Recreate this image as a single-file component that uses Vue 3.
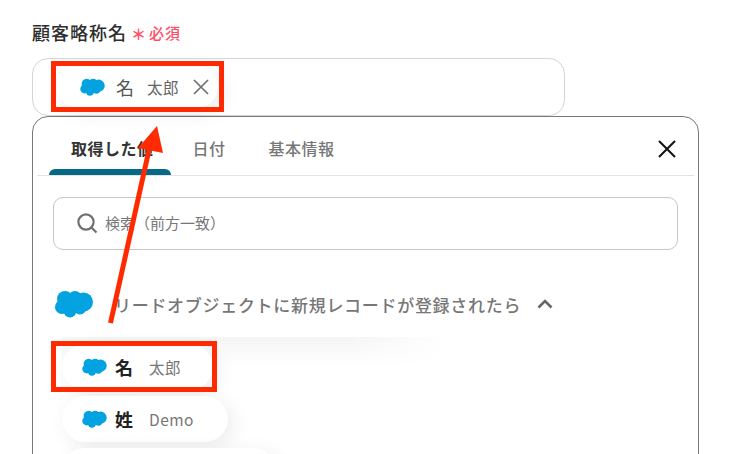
<script setup>
const tabs = [
  { label: '取得した値', active: true },
  { label: '日付', active: false },
  { label: '基本情報', active: false },
]
const rows = [
  { key: '名', value: '太郎', width: '151px' },
  { key: '姓', value: 'Demo', width: '166px' },
  { key: '', value: '', width: '215px' },
]
const lobes = [
  [10, 9, 8],
  [20, 8, 7],
  [28.5, 12, 9.5],
  [7, 17, 7],
  [15, 21, 6.500],
  [25, 18, 6.500],
  [17, 14, 9],
]
</script>

<template>
  <div class="page">
    <div class="label-row">
      <span class="label">顧客略称名</span>
      <span class="star">＊</span>
      <span class="required">必須</span>
    </div>

    <div class="input">
      <div class="chip chip-top">
        <svg class="cloud" viewBox="0 0 38 28"><circle v-for="(c, i) in lobes" :key="i" :cx="c[0]" :cy="c[1]" :r="c[2]" /></svg>
        <span class="chip-key thin">名</span>
        <span class="chip-value">太郎</span>
        <svg class="chip-x" viewBox="0 0 16 16"><path d="M1 1l14 14M15 1L1 15" /></svg>
      </div>
    </div>

    <div class="panel">
      <div class="tabs">
        <div v-for="t in tabs" :key="t.label" class="tab" :class="{ active: t.active }">{{ t.label }}</div>
        <svg class="close" viewBox="0 0 18 18"><path d="M1 1l16 16M17 1L1 17" /></svg>
      </div>

      <div class="search">
        <svg class="lens" viewBox="0 0 21 21"><circle cx="9" cy="9" r="7.600" /><path d="M14.500 14.500l5 5" /></svg>
        <span class="placeholder">検索（前方一致）</span>
      </div>

      <div class="section">
        <svg class="cloud-big" viewBox="0 0 38 28"><circle v-for="(c, i) in lobes" :key="i" :cx="c[0]" :cy="c[1]" :r="c[2]" /></svg>
        <span class="section-title">リードオブジェクトに新規レコードが登録されたら</span>
        <svg class="chev" viewBox="0 0 16 10"><path d="M1.500 8.500L8 2l6.500 6.500" /></svg>
      </div>

      <div class="list">
        <div class="shade"></div>
        <div v-for="(r, i) in rows" :key="i" class="chip chip-row" :style="{ width: r.width }">
          <template v-if="r.key">
            <svg class="cloud" viewBox="0 0 38 28"><circle v-for="(c, j) in lobes" :key="j" :cx="c[0]" :cy="c[1]" :r="c[2]" /></svg>
            <span class="chip-key">{{ r.key }}</span>
            <span class="chip-value">{{ r.value }}</span>
          </template>
        </div>
      </div>
    </div>

    <div class="mark mark-a"></div>
    <div class="mark mark-b"></div>
    <svg class="arrow" viewBox="0 0 750 454" width="750" height="454">
      <path d="M110.500 323L149 150" />
      <polygon points="157,126 163,153 138,148" />
    </svg>
  </div>
</template>

<style>
html, body { margin: 0; background: #fff; }
</style>

<style scoped>
.page {
  position: relative;
  width: 750px;
  height: 454px;
  overflow: hidden;
  box-sizing: border-box;
  padding: 19px 0 0 32px;
  background: #fff;
  font-family: "Noto Sans CJK JP", "Noto Sans", sans-serif;
  color: #333;
}
.label-row {
  display: flex;
  align-items: center;
  height: 26px;
}
.label { font-size: 18px; font-weight: 500; letter-spacing: 1px; color: #2e2e2e; }
.star { margin: 3px 0 0 4px; font-size: 15px; font-weight: 700; color: #ff4d67; }
.required { margin-left: 3px; font-size: 15px; font-weight: 500; letter-spacing: 1px; color: #ff4d67; }

.input {
  box-sizing: border-box;
  display: flex;
  align-items: center;
  width: 533px;
  height: 58px;
  margin-top: 13px;
  padding-left: 24px;
  border: 1px solid #d2d4de;
  border-radius: 16px;
}
.chip {
  box-sizing: border-box;
  display: flex;
  align-items: center;
  border-radius: 23px;
  background: #fff;
  box-shadow: 5px 5px 20px rgba(0, 0, 0, 0.08);
}
.chip-top { width: 161px; height: 42px; padding-left: 23px; border-radius: 21px; }
.cloud { width: 25px; height: 18px; flex: none; fill: #03a2e0; }
.chip-key { margin-left: 8px; width: 18px; font-size: 18px; font-weight: 700; color: #222; }
.chip-key.thin { margin-left: 11px; font-weight: 400; color: #555; }
.chip-value { margin-left: 16px; font-size: 15.500px; letter-spacing: 0.500px; color: #777; }
.chip-top .chip-value { margin-left: 13px; color: #666; }
.chip-x { width: 16px; height: 16px; margin-left: 14px; fill: none; stroke: #707070; stroke-width: 1.700; }

.panel {
  box-sizing: border-box;
  width: 667px;
  height: 400px;
  border: 1px solid #777;
  border-radius: 16px;
  background: #fff;
}
.tabs {
  position: relative;
  display: flex;
  width: 657px;
  height: 59px;
  margin-left: 4px;
  padding-left: 12px;
  box-sizing: border-box;
  border-bottom: 1px solid #e3e3e6;
}
.tab {
  position: relative;
  display: flex;
  align-items: center;
  padding: 4px 21.500px 0;
  font-size: 16px;
  font-weight: 500;
  letter-spacing: 0.500px;
  color: #777;
  box-sizing: border-box;
  height: 58px;
}
.tab.active {
  width: 122px;
  padding: 4px 0 0 22px;
  color: #333;
  font-weight: 700;
}
.tab.active::after {
  content: "";
  position: absolute;
  left: 0;
  right: 0;
  bottom: 0;
  height: 6px;
  border-radius: 6px 6px 0 0;
  background: #066a84;
}
.close { position: absolute; right: 18px; top: 23px; width: 18px; height: 18px; fill: none; stroke: #111; stroke-width: 2; }

.search {
  box-sizing: border-box;
  display: flex;
  align-items: center;
  width: 625px;
  height: 53px;
  margin: 21px 0 0 20px;
  padding-left: 23px;
  border: 1px solid #c6c6c6;
  border-radius: 10px;
}
.lens { width: 21px; height: 21px; fill: none; stroke: #707070; stroke-width: 2.200; }
.placeholder { margin: 0 0 2px 7px; font-size: 15px; color: #777; }

.section {
  display: flex;
  align-items: center;
  height: 40px;
  margin: 34px 0 0 22px;
}
.cloud-big { width: 38px; height: 28px; fill: #03a2e0; }
.section-title { margin-left: 21px; font-size: 17px; font-weight: 500; letter-spacing: 0.700px; color: #777; }
.chev { width: 16px; height: 10px; margin-left: 16px; fill: none; stroke: #666; stroke-width: 2.600; }

.list {
  position: relative;
  display: flex;
  flex-direction: column;
  align-items: flex-start;
  gap: 6px;
  margin: 20px 0 0 29px;
}
.shade {
  position: absolute;
  left: 0;
  top: -7px;
  width: 385px;
  height: 30px;
  background: linear-gradient(#f5f5f5, #fff);
  -webkit-mask-image: linear-gradient(to right, #000 75%, transparent);
  mask-image: linear-gradient(to right, #000 75%, transparent);
}
.chip-row { position: relative; height: 46px; padding-left: 20px; flex: none; }

.mark {
  position: absolute;
  left: 51px;
  width: 173px;
  height: 51px;
  box-sizing: border-box;
  border: 5px solid #ff2a00;
}
.mark-a { top: 61px; }
.mark-b { top: 341px; width: 166px; }
.arrow { position: absolute; left: 0; top: 0; pointer-events: none; }
.arrow path { fill: none; stroke: #ff2a00; stroke-width: 5; }
.arrow polygon { fill: #ff2a00; }
</style>
